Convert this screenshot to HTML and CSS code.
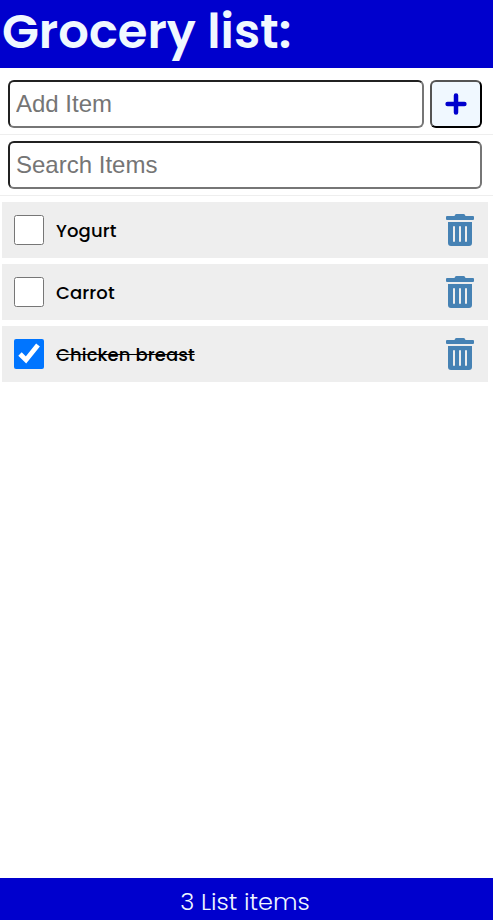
FILE: index.html
```html
<!DOCTYPE html>
<html lang="en">
<head>
<meta charset="utf-8">
<title>Grocery list</title>
<link rel="stylesheet" href="styles.css">
</head>
<body>
<svg class="sprite"><symbol id="trash" viewBox="0 0 448 512"><path d="M32 464a48 48 0 0 0 48 48h288a48 48 0 0 0 48-48V128H32zm272-256a16 16 0 0 1 32 0v224a16 16 0 0 1-32 0zm-96 0a16 16 0 0 1 32 0v224a16 16 0 0 1-32 0zm-96 0a16 16 0 0 1 32 0v224a16 16 0 0 1-32 0zM432 32H312l-9.400-18.700A24 24 0 0 0 281.100 0H166.800a23.720 23.720 0 0 0-21.400 13.300L136 32H16A16 16 0 0 0 0 48v32a16 16 0 0 0 16 16h416a16 16 0 0 0 16-16V48a16 16 0 0 0-16-16z"/></symbol></svg>
<div class="app">
<header class="header"><h1 class="title">Grocery list:</h1></header>
<form class="add-form">
<input class="field" type="text" placeholder="Add Item" aria-label="Add Item">
<button class="add-button" type="button" aria-label="Add"><svg class="plus" viewBox="0 0 24 24"><path d="M12 3.600v16.800M3.600 12h16.800"/></svg></button>
</form>
<form class="search-form"><input class="field" type="text" placeholder="Search Items" aria-label="Search Items"></form>
<main class="main">
<ul class="list">
<li class="item"><input class="check" type="checkbox" aria-label="Yogurt"><label class="name">Yogurt</label><svg class="trash"><use href="#trash"/></svg></li>
<li class="item"><input class="check" type="checkbox" aria-label="Carrot"><label class="name">Carrot</label><svg class="trash"><use href="#trash"/></svg></li>
<li class="item"><input class="check" type="checkbox" checked aria-label="Chicken breast"><label class="name done">Chicken breast</label><svg class="trash"><use href="#trash"/></svg></li>
</ul>
</main>
<footer class="footer"><p class="count">3 List items</p></footer>
</div>
</body>
</html>
```
FILE: styles.css
```css
* { box-sizing: border-box; margin: 0; padding: 0; }
body { font-family: Poppins, "Open Sans", sans-serif; background: #fff; }
.sprite { display: none; }
.app { height: 920px; display: flex; flex-direction: column; }
.header { height: 68px; padding: 0 2px; background: mediumblue; color: aliceblue; }
.title { font-size: 48px; line-height: 64px; font-weight: 600; }
.add-form, .search-form { display: flex; gap: 6px; padding: 6px 11px 6px 8px; border-bottom: 1px solid #eee; }
.add-form { height: 67px; padding-top: 12px; }
.search-form { height: 61px; }
.field { flex: 1; min-width: 0; height: 48px; padding: 4px 6px; border: 2px inset #767676; border-radius: 6px; font: 24px "Liberation Sans", sans-serif; }
.add-button { width: 52px; height: 48px; display: grid; place-items: center; border: 2px outset #000; border-radius: 6px; background: aliceblue; }
.plus { width: 24px; height: 24px; fill: none; stroke: mediumblue; stroke-width: 4.500; stroke-linecap: round; }
.main { flex: 1; }
.list { list-style: none; padding: 6px 5px 0 2px; display: grid; gap: 6px; }
.item { height: 56px; padding: 0 14px 0 12px; display: flex; align-items: center; background: #eee; }
.check { width: 30px; height: 30px; }
.name { flex: 1; padding-left: 12px; font-size: 18px; font-weight: 500; letter-spacing: 0.1px; }
.done { text-decoration: line-through; }
.trash { width: 28px; height: 32px; fill: steelblue; }
.footer { height: 42px; background: mediumblue; color: aliceblue; text-align: center; }
.count { font-size: 24px; line-height: 48px; height: 42px; padding-right: 3px; font-weight: 300; }
```
